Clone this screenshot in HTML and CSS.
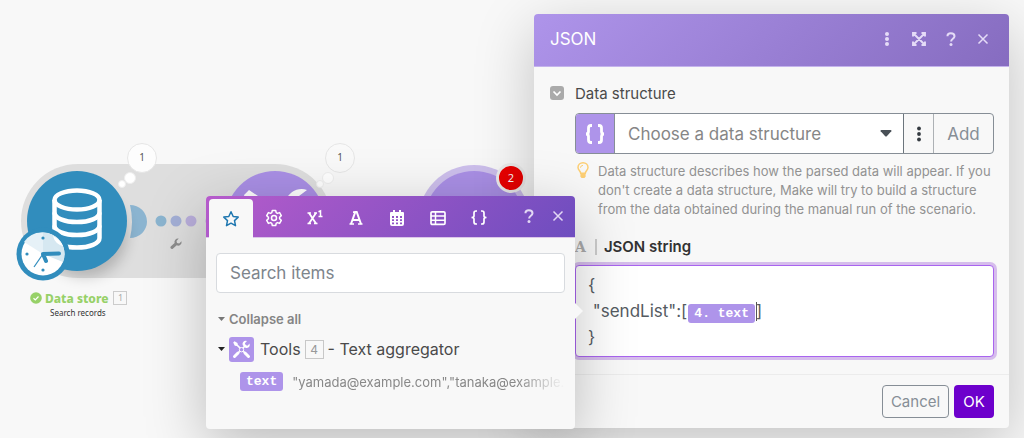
FILE: index.html
```html
<!DOCTYPE html>
<html lang="en">
<head>
<meta charset="utf-8">
<meta name="viewport" content="width=device-width, initial-scale=1">
<title>Scenario editor</title>
<link rel="stylesheet" href="styles.css">
</head>
<body>
<main class="canvas">
  <div class="track"></div>

  <svg class="links" viewBox="0 0 90 50" aria-hidden="true">
    <path d="M0 9a17 16.500 0 0 1 0 33q4-16.500 0-33z" fill="#8bb4d0"/>
    <circle cx="31" cy="25" r="5.500" fill="#8bb4cf"/>
    <circle cx="46" cy="25" r="5.500" fill="#a3afd6"/>
    <circle cx="61" cy="25" r="5.500" fill="#b9aedb"/>
    <circle cx="81" cy="25" r="5.500" fill="#b9aedb"/>
    <g transform="translate(40 42)"><path d="M11.500 3.200 9.200 5.500 7 5 6.500 2.900 8.700.6A3.500 3.500 0 0 0 4.600 5.100L.7 8.600a1.500 1.500 0 0 0 2.100 2.100L6.700 7.300a3.500 3.500 0 0 0 4.800-4.100z" fill="#8d8d8d"/></g>
  </svg>

  <div class="node node-store">
    <svg viewBox="0 0 60 70" aria-hidden="true">
      <g fill="none" stroke="#fff" stroke-width="4.500">
        <ellipse cx="30" cy="14" rx="22.500" ry="9.500"/>
        <path d="M7.500 14v38c0 5.500 10 9.500 22.500 9.500s22.500-4 22.500-9.500V14"/>
        <path d="M7.500 26.500c0 5.500 10 9.500 22.500 9.500s22.500-4 22.500-9.500M7.500 39.500c0 5.500 10 9.500 22.500 9.500s22.500-4 22.500-9.500"/>
      </g>
    </svg>
  </div>
  <div class="node node-tools">
    <svg viewBox="0 0 100 100" aria-hidden="true">
      <g fill="#fff"><path d="M19 24l5-5 9 6v5l34 36-5 5-36-36h-4z"/><path d="M82 19c-9-3-18 2-21 10-1 3-1 6 0 9L25 72l7 7 36-34c11 3 20-6 18-17l-9 6-7-6z"/></g>
    </svg>
  </div>
  <div class="node node-json"></div>

  <svg class="clock" viewBox="0 0 54 54" aria-hidden="true">
    <circle cx="27" cy="27" r="26.500" fill="#318dbd"/>
    <circle cx="27" cy="27" r="21.500" fill="#fff"/>
    <path d="M27 27V5.500A21.500 21.500 0 0 1 47 35z" fill="#d6e8f1"/>
    <path d="M27 27 8 15A21.500 21.500 0 0 1 27 5.500z" fill="#e6f1f7"/>
    <path d="M37 9a21.500 21.500 0 0 1 10 10q-8-2-10-10z" fill="#fff"/>
    <g fill="#318dbd"><circle cx="27" cy="11" r="1.600"/><circle cx="11" cy="27" r="1.600"/><circle cx="27" cy="43" r="1.600"/></g>
    <path d="M27 27 43 26.500M27 27l3 7" stroke="#318dbd" stroke-width="4" stroke-linecap="round"/>
    <path d="M27 27 18 40" stroke="#318dbd" stroke-width="1.200"/>
  </svg>

  <div class="bubble bubble-store">1</div>
  <div class="bubble bubble-tools">1</div>
  <div class="error-badge">2</div>

  <div class="node-label">
    <div class="node-title">
      <svg width="12" height="12" viewBox="0 0 12 12" aria-hidden="true"><circle cx="6" cy="6" r="5.800" fill="#97d168"/><path d="m3.500 6.200 1.800 1.700 3.200-3.400" fill="none" stroke="#fff" stroke-width="1.200"/></svg>
      <strong>Data store</strong><span class="node-number">1</span>
    </div>
    <div class="node-sub">Search records</div>
  </div>

  <section class="dialog" aria-label="JSON">
    <header class="dialog-head">
      <h1>JSON</h1>
      <button type="button" aria-label="More"><svg width="18" height="18" viewBox="0 0 18 18"><g fill="currentColor"><circle cx="9" cy="4" r="2"/><circle cx="9" cy="9" r="2"/><circle cx="9" cy="14" r="2"/></g></svg></button>
      <button type="button" aria-label="Expand"><svg width="18" height="18" viewBox="0 0 18 18"><path d="M3 6.500V3h3.500M11.500 3H15v3.500M15 11.500V15h-3.500M6.500 15H3v-3.500M3.500 3.500l11 11m0-11-11 11" fill="none" stroke="currentColor" stroke-width="1.900"/></svg></button>
      <button type="button" aria-label="Help"><svg width="18" height="18" viewBox="0 0 18 18"><path d="M5.500 6.300V5.800c0-1.600 1.200-2.600 3.300-2.600 2.300 0 3.700 1.200 3.700 3 0 2.500-3.400 2.500-3.400 5.200" fill="none" stroke="currentColor" stroke-width="2"/><circle cx="9" cy="14.500" r="1.500" fill="currentColor"/></svg></button>
      <button type="button" aria-label="Close"><svg width="18" height="18" viewBox="0 0 18 18"><path d="m4.500 4.500 9 9m0-9-9 9" stroke="currentColor" stroke-width="1.500"/></svg></button>
    </header>
    <div class="dialog-body">
      <div class="field-head">
        <button class="toggle" type="button" aria-label="Toggle field"><svg width="14" height="14" viewBox="0 0 14 14"><path d="m3.500 5.500 3.500 3.500 3.500-3.500" fill="none" stroke="#fff" stroke-width="1.700"/></svg></button>
        <label for="structure">Data structure</label>
      </div>
      <div class="field">
        <div class="select-group">
          <span class="prefix"><svg width="22" height="20" viewBox="0 0 22 20" aria-hidden="true"><path d="M8 1.500H7Q4.500 1.500 4.500 4v3.500Q4.500 10 2 10q2.500 0 2.500 2.500V16q0 2.500 2.500 2.500h1M14 1.500h1q2.500 0 2.500 2.500v3.500Q17.500 10 20 10q-2.500 0-2.500 2.500V16q0 2.500-2.500 2.500h-1" fill="none" stroke="#fff" stroke-width="2.800"/></svg></span>
          <div class="select-wrap">
            <select id="structure"><option>Choose a data structure</option></select>
            <svg class="caret" width="12" height="7" viewBox="0 0 12 7" aria-hidden="true"><path d="M1.500 0h9q1.500 0 .8 1.300L7 6q-1 1-2 0L.7 1.300Q0 0 1.500 0z" fill="#495057"/></svg>
          </div>
          <button class="more" type="button" aria-label="Options"><svg width="6" height="16" viewBox="0 0 6 16"><g fill="#343a40"><circle cx="3" cy="2.500" r="1.900"/><circle cx="3" cy="8" r="1.900"/><circle cx="3" cy="13.500" r="1.900"/></g></svg></button>
          <button class="add" type="button">Add</button>
        </div>
        <div class="hint">
          <svg width="12" height="17" viewBox="0 0 12 17" aria-hidden="true"><path d="M3.700 11.200C3.700 9 1 8.200 1 5.400a5 4.600 0 0 1 10 0c0 2.800-2.700 3.600-2.700 5.800z" fill="none" stroke="#fdcf74" stroke-width="1.500"/><path d="M3.400 12h5.200v2.500L7.500 16h-3l-1.100-1.500z" fill="#fdcf74"/><path d="M3.500 5.700Q3.500 3.500 6 3.400" fill="none" stroke="#fdcf74"/></svg>
          <p>Data structure describes how the parsed data will appear. If you don't create a data structure, Make will try to build a structure from the data obtained during the manual run of the scenario.</p>
        </div>
        <div class="string-label"><span class="type-mark" aria-hidden="true">A</span><span id="string-name" class="string-name">JSON string</span></div>
        <div class="editor" role="textbox" aria-multiline="true" aria-labelledby="string-name" contenteditable="true" spellcheck="false"><div>{</div><div>&nbsp;"sendList":[<span class="pill" contenteditable="false">4. text</span><span class="cursor"></span>]</div><div>}</div></div>
      </div>
    </div>
    <footer class="dialog-foot">
      <button class="cancel" type="button">Cancel</button>
      <button class="ok" type="button">OK</button>
    </footer>
  </section>

  <section class="picker" aria-label="Mapping panel">
    <header class="picker-head">
      <button class="tab tab-active" type="button" aria-label="Favorites"><svg width="18" height="18" viewBox="0 0 18 18"><path d="m9 1.800 2.200 4.700 5 .6-3.700 3.500 1 5.100L9 13.200l-4.500 2.500 1-5.100L1.800 7.100l5-.6z" fill="none" stroke="#1f77b0" stroke-width="1.500" stroke-linejoin="round"/></svg></button>
      <button class="tab" type="button" aria-label="General"><svg width="18" height="18" viewBox="0 0 18 18"><path d="M7.300 1.500h3.400l.5 2.200 1.200.7 2.200-.8 1.700 3-1.700 1.600v1.600l1.700 1.600-1.700 3-2.200-.8-1.200.7-.5 2.200H7.300l-.5-2.200-1.200-.7-2.200.8-1.700-3 1.700-1.600V8.200L1.700 6.600l1.700-3 2.200.8 1.200-.7z" fill="none" stroke="#fff" stroke-width="1.500" stroke-linejoin="round"/><circle cx="9" cy="9" r="2.500" fill="none" stroke="#fff" stroke-width="1.500"/></svg></button>
      <button class="tab" type="button" aria-label="Math"><svg width="18" height="18" viewBox="0 0 18 18"><path d="m3 4 7 10.500M10 4 3 14.500" stroke="#fff" stroke-width="1.800"/><path d="M1.500 4h3.500M8 4h3M1.500 14.500H5m3 0h3.500M12.500 7.500h4M12.500 2.700l2-.9v5.700" fill="none" stroke="#fff" stroke-width="1.500"/></svg></button>
      <button class="tab" type="button" aria-label="Text"><svg width="18" height="18" viewBox="0 0 18 18"><path d="M4 15 8.300 3h1.400L14 15M5.500 11h7" fill="none" stroke="#fff" stroke-width="2"/><path d="M2.500 15H7m4 0h4.500M6 3.200h4" stroke="#fff" stroke-width="1.700"/></svg></button>
      <button class="tab" type="button" aria-label="Date"><svg width="18" height="18" viewBox="0 0 18 18"><path fill="#fff" fill-rule="evenodd" d="M5 1h2v2h4V1h2v2h2q1 0 1 1v11q0 2-2 2H4q-2 0-2-2V4q0-1 1-1h2zM4 7v2h2V7zm4 0v2h2V7zm4 0v2h2V7zm-8 3.300v1.700h2v-1.700zm4 0v1.700h2v-1.700zm4 0v1.700h2v-1.700zm-8 3.200v1.700h2v-1.700zm4 0v1.700h2v-1.700zm4 0v1.700h2v-1.700z"/></svg></button>
      <button class="tab" type="button" aria-label="Array"><svg width="18" height="18" viewBox="0 0 18 18"><rect x="2" y="2.800" width="14" height="12.600" rx="1.200" fill="none" stroke="#fff" stroke-width="1.700"/><path d="M2 7h14M2 11.200h14M6.500 3v12" stroke="#fff" stroke-width="1.500"/></svg></button>
      <button class="tab" type="button" aria-label="Variables"><svg width="18" height="18" viewBox="0 0 18 18"><path d="M7 2H6Q4 2 4 4v3Q4 8.500 1.500 8.500 4 8.500 4 10v3q0 2 2 2h1M11 2h1q2 0 2 2v3q0 1.500 2.500 1.500Q14 8.500 14 10v3q0 2-2 2h-1" fill="none" stroke="#fff" stroke-width="1.700"/></svg></button>
      <div class="picker-tools">
        <button type="button" aria-label="Help"><svg width="18" height="18" viewBox="0 0 18 18"><path d="M5.500 6.300V5.800c0-1.600 1.200-2.600 3.300-2.600 2.300 0 3.700 1.200 3.700 3 0 2.500-3.400 2.500-3.400 5.200" fill="none" stroke="currentColor" stroke-width="2"/><circle cx="9" cy="14.500" r="1.500" fill="currentColor"/></svg></button>
        <button type="button" aria-label="Close"><svg width="18" height="18" viewBox="0 0 18 18"><path d="m4.500 4.500 9 9m0-9-9 9" stroke="currentColor" stroke-width="1.500"/></svg></button>
      </div>
    </header>
    <div class="picker-body">
      <input class="search" type="text" placeholder="Search items" aria-label="Search items">
      <button class="collapse" type="button"><svg width="7" height="4" viewBox="0 0 7 4" aria-hidden="true"><path d="M0 0h7L3.500 4z" fill="#777"/></svg>Collapse all</button>
      <div class="module">
        <svg width="7" height="4" viewBox="0 0 7 4" aria-hidden="true"><path d="M0 0h7L3.500 4z" fill="#222"/></svg>
        <span class="module-icon"><svg width="19" height="19" viewBox="0 0 19 19" aria-hidden="true"><path d="M5 5l9.500 9.500M14 5l-9.500 9.500" stroke="#fff" stroke-width="1.700"/><path d="M1.200 2.500 2.500 1.200l3 1.800.3 2-1 1-2-.3zM17.600 3.500l-2.200 2.200-2-.5-.5-2L15 1q-2.500-.7-4 1.200-.9 1.400-.2 3l2.600 2.600q1.800.8 3.300-.5 1.500-1.500.9-3.800z" fill="#fff"/><path d="m13 13 3.500 3.500M6 13l-3.500 3.500" stroke="#fff" stroke-width="3" stroke-linecap="round"/><circle cx="9.500" cy="9.700" r="2.200" fill="#ae94ea" stroke="#fff"/></svg></span>
        <span>Tools</span><span class="module-number">4</span><span>- Text aggregator</span>
      </div>
      <div class="item"><span class="pill">text</span><span class="sample">"yamada@example.com","tanaka@example.com"</span></div>
    </div>
  </section>
</main>
</body>
</html>
```
FILE: styles.css
```css
* { box-sizing: border-box; }
body { margin: 0; font-family: Inter, "Liberation Sans", sans-serif; color: #4a4a4a; }
button { font: inherit; border: 0; padding: 0; background: none; color: inherit; cursor: pointer; }
svg { display: block; flex: none; }

/* Free canvas: modules and windows are placed by coordinates */
.canvas { position: relative; min-height: 100vh; overflow: hidden; background: #f8f8f8; }
.track { position: absolute; left: 21px; top: 164px; width: 311px; height: 114px; border-radius: 57px; background: #dedede; }
.links { position: absolute; left: 130px; top: 196px; width: 90px; height: 50px; overflow: visible; }
.node { position: absolute; top: 171px; width: 100px; height: 100px; border-radius: 50%; background: #a98fe5; }
.node-store { left: 27px; background: #318dbd; box-shadow: 8px 14px 14px -8px rgba(0, 0, 0, .2); display: grid; place-items: center; }
.node-store svg { width: 60px; height: 70px; }
.node-tools { left: 225px; }
.node-json { left: 424px; box-shadow: 0 0 0 6px #cdbfec; }
.clock { position: absolute; left: 16px; top: 227px; width: 54px; height: 54px; }
.bubble { position: absolute; top: 143px; width: 30px; height: 30px; border: 1px solid #e6e6e6; border-radius: 50%; background: #fdfdfd; font: 10px/27px "Noto Sans", sans-serif; text-align: center; color: #555; }
.bubble::before, .bubble::after { content: ""; position: absolute; border: 1px solid #eee; border-radius: 50%; background: #fff; }
.bubble::before { left: -4px; top: 28px; width: 10px; height: 10px; }
.bubble::after { left: -10px; top: 36px; width: 6px; height: 6px; }
.bubble-store { left: 127px; }
.bubble-tools { left: 325px; background: #f9f9f9; }
.error-badge { position: absolute; left: 496px; top: 163px; width: 30px; height: 30px; border: 3px solid #eee; border-radius: 50%; background: #ee0202; color: #fff; font: 11px/23px "Noto Sans", sans-serif; text-align: center; }
.node-label { position: absolute; left: 30px; top: 289px; width: 98px; font-family: "Noto Sans", sans-serif; }
.node-title { display: flex; align-items: center; gap: 3px; height: 18px; font-size: 12px; color: #97d168; white-space: nowrap; }
.node-title strong { font-weight: 800; }
.node-number { flex: none; margin-left: 2px; width: 14px; height: 14px; border: 1px solid #ccc; font-size: 9px; line-height: 12px; text-align: center; color: #aaa; }
.node-sub { font-size: 8px; line-height: 12px; margin: 0 0 0 20px; color: #333; }

.dialog { position: absolute; left: 534px; right: 15px; top: 14px; border-radius: 4px; background: #f8f8f8; box-shadow: 0 16px 60px rgba(0, 0, 0, .22); }
.dialog-head { display: flex; align-items: center; gap: 14px; height: 53px; padding: 0 17px 2px 16px; border-bottom: 1px solid #c4b3ec; border-radius: 4px 4px 0 0; background: linear-gradient(135deg, #ae94ea, #866cc0); color: #e5dcf7; }
.dialog-head h1 { flex: 1; margin: 0; font-size: 17px; font-weight: 400; color: #fff; }
.dialog-body { padding: 15px 15px 17px 16px; }
.field-head { display: flex; align-items: center; gap: 11px; height: 22px; font-size: 15px; }
.toggle { border-radius: 3px; background: #aaa; }
.field { padding: 9px 0 0 25px; }
.select-group { display: flex; height: 41px; border: 1px solid #868e96; border-radius: 4px; overflow: hidden; }
.prefix { display: grid; place-items: center; width: 39px; border-right: 1px solid #868e96; background: #ae94ea; }
.select-wrap { display: grid; flex: 1; align-items: center; background: #fff; }
.select-wrap > * { grid-area: 1 / 1; }
.select-wrap select { width: 100%; height: 100%; padding: 0 13px; border: 0; appearance: none; background: none; font: 17px Inter, sans-serif; color: #868686; }
.caret { justify-self: end; margin-right: 11px; pointer-events: none; }
.more { display: grid; place-items: center; width: 31px; border-left: 1px solid #6c757d; border-right: 1px solid #adb1b5; }
.add { width: 59px; font-size: 17px; color: #868e96; }
.hint { display: flex; gap: 9px; padding: 8px 0 0 2px; font-size: 13px; line-height: 19px; color: #929292; }
.hint p { margin: 0; }
.string-label { display: flex; align-items: center; gap: 9px; height: 20px; margin: 18px 0 8px; font-size: 15px; font-weight: 600; color: #333; }
.type-mark { font-family: "DejaVu Serif", serif; font-size: 14px; font-weight: 700; color: #aaa; }
.string-name { padding-left: 7px; border-left: 2px solid #ccc; line-height: 16px; }
.editor { padding: 6px 12px; border: 1px solid #a964ef; border-radius: 4px; box-shadow: 0 0 0 3px #d6bdec; background: #fff; font-size: 17px; line-height: 26px; color: #555b62; outline: 0; }
.pill { display: inline-block; padding: 0 6px; border-radius: 3px; background: #ae94ea; color: #fff; font: bold 13px/19px "Liberation Mono", monospace; }
.editor .pill { margin: 0 1px; }
.cursor { display: inline-block; width: 1px; height: 19px; margin-right: -1px; background: #555; vertical-align: -4px; }
.dialog-foot { display: flex; justify-content: flex-end; gap: 5px; padding: 10px 15px; border-top: 1px solid #ececec; font-size: 15px; }
.dialog-foot button { height: 33px; border-radius: 4px; }
.cancel { width: 67px; border: 1px solid #868e96; color: #868e96; }
.ok { width: 40px; background: #6d00cc; color: #fff; }

.picker { position: absolute; left: 206px; top: 196px; width: 369px; min-height: 233px; border-radius: 4px; background: #f8f8f8; box-shadow: 0 16px 60px rgba(0, 0, 0, .25); }
.picker::after { content: ""; position: absolute; left: 100%; top: 107px; border: 8px solid transparent; border-left-color: #f8f8f8; border-right-width: 0; }
.picker-head { display: flex; height: 42px; padding: 3px 8px 0 3px; border-bottom: 1px solid #dcc6e9; border-radius: 4px 4px 0 0; background: linear-gradient(135deg, #b65bcb, #6e4dbf); }
.tab { display: grid; place-items: center; flex: 0 1 41px; }
.tab-active { flex-basis: 44px; margin-bottom: -1px; border-radius: 4px 4px 0 0; background: #f8f8f8; }
.picker-tools { display: flex; align-items: center; gap: 11px; margin-left: auto; padding-bottom: 5px; color: #e2d8f4; }
.picker-body { padding: 15px 10px; }
.search { display: block; width: 100%; height: 40px; padding: 0 13px; border: 1px solid #d8dbdf; border-radius: 4px; background: #fff; font: 17px Inter, sans-serif; color: #444; }
.search::placeholder { color: #7d858c; }
.collapse { display: flex; align-items: center; gap: 4px; height: 20px; margin: 16px 0 7px 2px; font-size: 13px; font-weight: 600; color: #858585; }
.module { display: flex; align-items: center; gap: 4px; height: 26px; padding-left: 2px; font-size: 16px; white-space: nowrap; }
.module-icon { display: grid; place-items: center; width: 25px; height: 25px; margin-right: 2px; border-radius: 3px; background: #ae94ea; }
.module-number { width: 19px; border: 1px solid #c8c8c8; font-size: 12px; line-height: 17px; text-align: center; color: #999; }
.item { display: flex; align-items: center; gap: 9px; margin: 10px 0 0 24px; font-size: 13px; color: #888; }
.item .pill { flex: none; }
.sample { flex: 1; min-width: 0; overflow: hidden; white-space: nowrap; mask-image: linear-gradient(to right, #000 82%, transparent); }
```
